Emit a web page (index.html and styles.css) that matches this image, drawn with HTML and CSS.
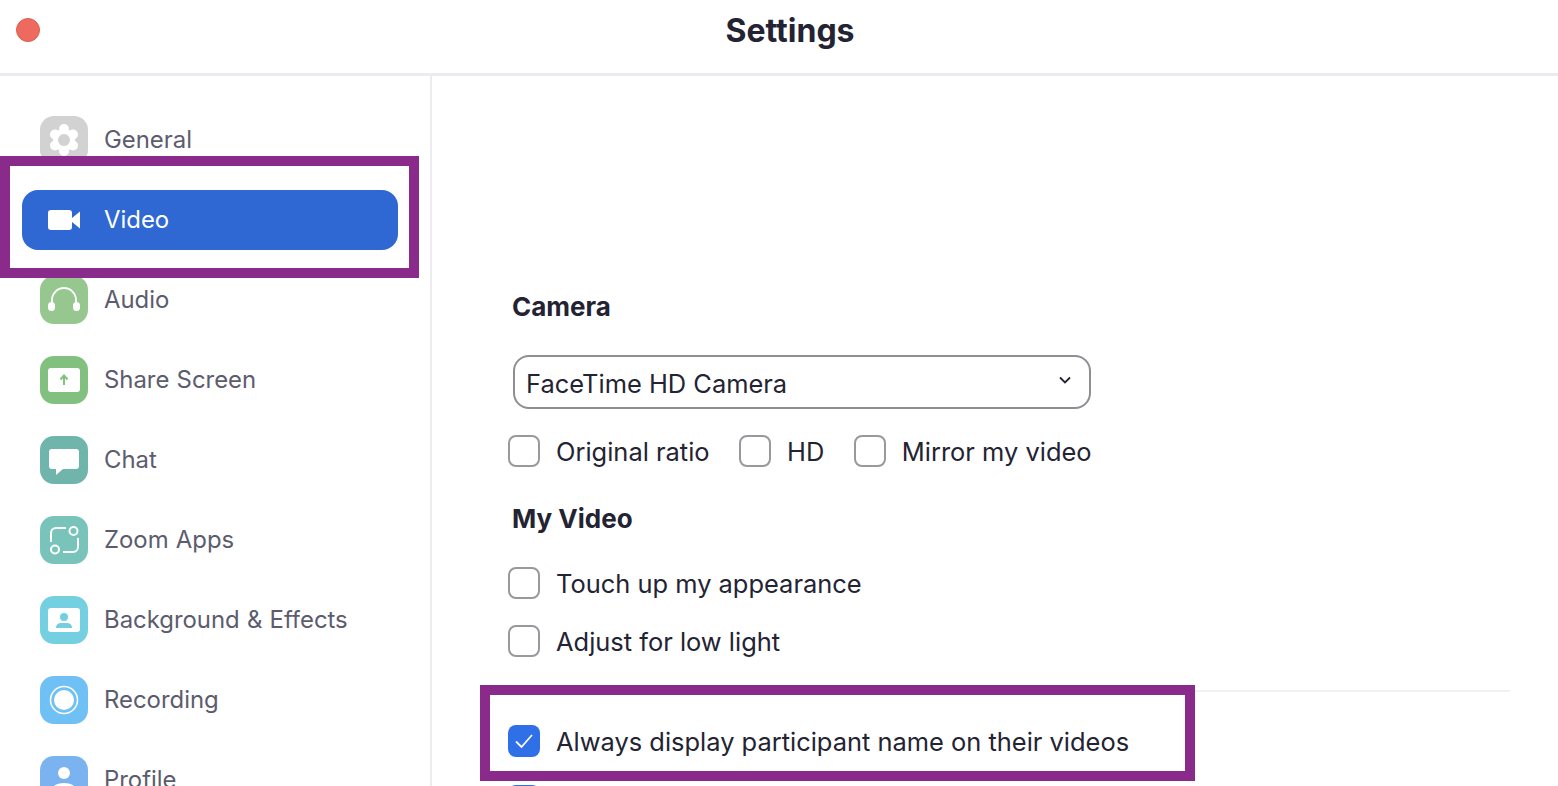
FILE: index.html
```html
<!DOCTYPE html>
<html lang="en">
<head>
  <meta charset="UTF-8">
  <title>Settings</title>
  <link rel="stylesheet" href="styles.css">
</head>
<body>
  <header class="titlebar">
    <span class="close-dot"></span>
    <h1>Settings</h1>
  </header>

  <div class="window">
    <nav class="sidebar">
      <div class="nav-item">
        <span class="nav-icon general">
          <svg viewBox="0 0 48 48"><g fill="#fff"><circle cx="24" cy="13" r="5"/><circle cx="24" cy="35" r="5"/><circle cx="15" cy="18.500" r="5"/><circle cx="33" cy="18.500" r="5"/><circle cx="15" cy="29.500" r="5"/><circle cx="33" cy="29.500" r="5"/><circle cx="24" cy="24" r="11"/></g><circle cx="24" cy="24" r="6" fill="#d2d2d2"/></svg>
        </span>
        <span class="nav-label">General</span>
      </div>

      <div class="nav-item selected">
        <div class="pill">
          <span class="nav-icon">
            <svg viewBox="0 0 48 48"><rect x="8" y="14" width="24" height="20" rx="3" fill="#fff"/><path d="M32 22 40 15.500V32.500L32 26Z" fill="#fff"/></svg>
          </span>
          <span class="nav-label">Video</span>
        </div>
      </div>

      <div class="nav-item">
        <span class="nav-icon audio">
          <svg viewBox="0 0 48 48"><path d="M12 30V24a12 12 0 0 1 24 0v6" fill="none" stroke="#fff" stroke-width="1.800"/><rect x="8" y="26" width="7" height="9" rx="3.500" fill="#fff"/><rect x="33" y="26" width="7" height="9" rx="3.500" fill="#fff"/></svg>
        </span>
        <span class="nav-label">Audio</span>
      </div>

      <div class="nav-item">
        <span class="nav-icon share">
          <svg viewBox="0 0 48 48"><rect x="8" y="12" width="32" height="24" rx="3" fill="#fff"/><path d="M24 29V20M20.500 23.500 24 19.500l3.500 4" fill="none" stroke="#82c080" stroke-width="2"/></svg>
        </span>
        <span class="nav-label">Share Screen</span>
      </div>

      <div class="nav-item">
        <span class="nav-icon chat">
          <svg viewBox="0 0 48 48"><path d="M12 13H36a3 3 0 0 1 3 3V30a3 3 0 0 1-3 3H23L16 39V33H12a3 3 0 0 1-3-3V16a3 3 0 0 1 3-3Z" fill="#fff"/></svg>
        </span>
        <span class="nav-label">Chat</span>
      </div>

      <div class="nav-item">
        <span class="nav-icon apps">
          <svg viewBox="0 0 48 48"><g fill="none" stroke="#fff" stroke-width="2"><circle cx="33.500" cy="15" r="4"/><circle cx="15" cy="33.500" r="4"/><path d="M11 26V17a5 5 0 0 1 5-5H26"/><path d="M38 22V31a5 5 0 0 1-5 5H23"/></g></svg>
        </span>
        <span class="nav-label">Zoom Apps</span>
      </div>

      <div class="nav-item">
        <span class="nav-icon background">
          <svg viewBox="0 0 48 48"><rect x="8" y="12" width="32" height="24" rx="3" fill="#fff"/><circle cx="24" cy="21" r="4" fill="#74cfe0"/><path d="M16 32v-1a5 5 0 0 1 5-4h6a5 5 0 0 1 5 4v1Z" fill="#74cfe0"/></svg>
        </span>
        <span class="nav-label">Background &amp; Effects</span>
      </div>

      <div class="nav-item">
        <span class="nav-icon recording">
          <svg viewBox="0 0 48 48"><circle cx="24" cy="24" r="13.500" fill="none" stroke="#fff" stroke-width="1.500"/><circle cx="24" cy="24" r="10" fill="#fff"/></svg>
        </span>
        <span class="nav-label">Recording</span>
      </div>

      <div class="nav-item">
        <span class="nav-icon profile">
          <svg viewBox="0 0 48 48"><circle cx="24" cy="17" r="6" fill="#fff"/><path d="M11 36c0-6 6-9 13-9s13 3 13 9v2H11Z" fill="#fff"/></svg>
        </span>
        <span class="nav-label">Profile</span>
      </div>
    </nav>

    <main class="content">
      <h2 class="camera-title">Camera</h2>

      <div class="select">
        FaceTime HD Camera
        <svg class="chevron" viewBox="0 0 12 8"><path d="M1 1.500 6 6.500 11 1.500" fill="none" stroke="#232333" stroke-width="1.800"/></svg>
      </div>

      <div class="option-row camera-options">
        <label class="option"><span class="box"></span>Original ratio</label>
        <label class="option"><span class="box"></span>HD</label>
        <label class="option"><span class="box"></span>Mirror my video</label>
      </div>

      <h2 class="video-title">My Video</h2>

      <div class="option-row touch-up">
        <label class="option"><span class="box"></span>Touch up my appearance</label>
      </div>
      <div class="option-row low-light">
        <label class="option"><span class="box"></span>Adjust for low light</label>
      </div>

      <hr class="divider">

      <div class="option-row name-row">
        <label class="option">
          <span class="box checked">
            <svg viewBox="0 0 32 32"><path d="M8 16.500 13.500 22 24 10" fill="none" stroke="#fff" stroke-width="1.800"/></svg>
          </span>
          Always display participant name on their videos
        </label>
        <span class="frame"></span>
      </div>

      <div class="option-row next-row">
        <label class="option"><span class="box checked"></span></label>
      </div>
    </main>
  </div>
</body>
</html>
```

FILE: styles.css
```css
html, body { margin: 0; height: 786px; overflow: hidden; background: #fff; }
body { font-family: Inter, "Liberation Sans", sans-serif; color: #232333; }

.titlebar { position: relative; height: 73px; border-bottom: 3px solid #ebebf0; display: flex; justify-content: center; padding-left: 22px; }
.titlebar h1 { margin: 0; font-size: 32px; font-weight: 700; line-height: 62px; }
.close-dot { position: absolute; left: 16px; top: 18px; width: 24px; height: 24px; border-radius: 50%; background: #ee6a5f; box-sizing: border-box; border: 1px solid #dc5d52; }

.window { display: flex; height: 710px; overflow: hidden; }

.sidebar { width: 430px; flex: none; border-right: 2px solid #ebebf0; padding-top: 24px; }
.nav-item { height: 80px; display: flex; align-items: center; padding-left: 40px; font-size: 23.9px; word-spacing: 0.5px; color: #5c5c6e; }
.nav-icon { width: 48px; height: 48px; border-radius: 14px; margin-right: 16px; flex: none; display: block; }
.nav-icon svg { display: block; width: 48px; height: 48px; }
.nav-label { margin-bottom: 2px; }

.general { background: #d2d2d2; }
.audio { background: #95c78f; }
.share { background: #82c080; }
.chat { background: #6fb5ab; }
.apps { background: #79c4ba; }
.background { background: #74cfe0; }
.recording { background: #6fc0f5; }
.profile { background: #7ab3f0; }

/* purple frame sits over the neighbours, pill sits over the frame */
.nav-item.selected { position: relative; z-index: 1; padding-left: 22px; }
.nav-item.selected::before { content: ""; position: absolute; left: 0; top: -24px; width: 419px; height: 122px; box-sizing: border-box; border: 10px solid #8a2a8a; background: #fff; }
.pill { position: relative; width: 376px; height: 60px; border-radius: 16px; background: #2f68d3; color: #fff; display: flex; align-items: center; padding-left: 18px; box-sizing: border-box; }

.content { flex: 1; padding: 0 48px 0 81px; font-size: 25.45px; }
.content h2 { margin: 0 0 0 -1px; font-size: 26px; font-weight: 700; line-height: 32px; }
.content .camera-title { padding-top: 215px; }
.select { display: flex; align-items: center; justify-content: space-between; width: 578px; height: 54px; margin-top: 32px; padding: 3px 18px 0 11px; box-sizing: border-box; border: 2px solid #8e8e93; border-radius: 16px; }
.chevron { width: 12px; height: 8px; margin-bottom: 8px; }

.option-row { display: flex; margin-left: -5px; }
.option { display: flex; align-items: center; }
.box { width: 32px; height: 32px; margin-right: 16px; flex: none; box-sizing: border-box; border: 2px solid #98989d; border-radius: 8px; background: #fff; }
.box svg { display: block; width: 32px; height: 32px; }
.box.checked { border: 0; background: #2f6fe8; }

.camera-options { gap: 29.5px; margin-top: 26px; }
.content .video-title { margin-top: 36px; }
.touch-up { margin-top: 32px; }
.low-light { margin-top: 26px; }
.divider { margin: 33px 0 0; border: 0; border-top: 2px solid #f0f0f5; }

.name-row { position: relative; margin-top: 33px; }
.frame { position: absolute; left: -28px; top: -40px; width: 715px; height: 96px; box-sizing: border-box; border: 10px solid #8a2a8a; }
.next-row { margin-top: 28px; }
```
